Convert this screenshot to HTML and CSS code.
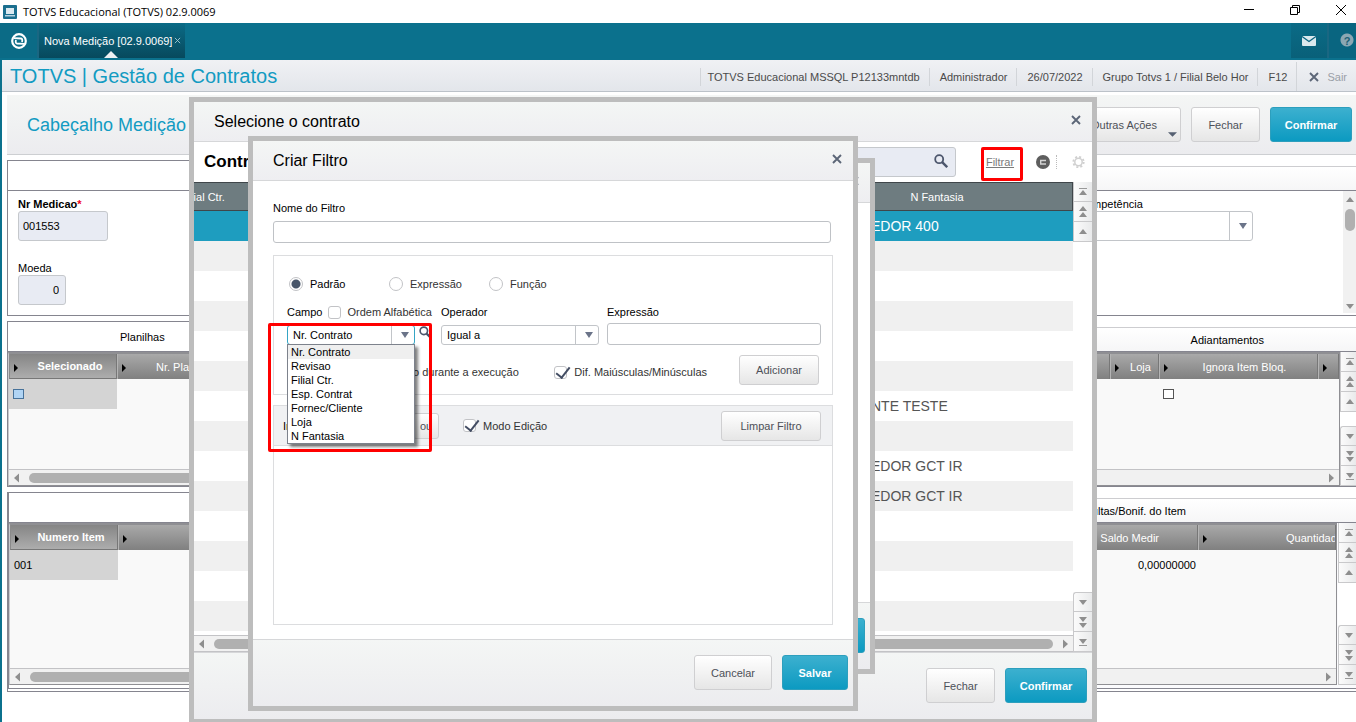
FILE: index.html
```html
<!DOCTYPE html>
<html lang="pt-BR">
<head>
<meta charset="utf-8">
<title>TOTVS Educacional (TOTVS) 02.9.0069</title>
<link rel="stylesheet" href="styles.css">
</head>
<body>
<svg class="defs" aria-hidden="true">
  <symbol id="i-top" viewBox="0 0 10 10"><path d="M1 1.5h8" stroke="#999" fill="none"/><path d="M5 3l4 5H1z" fill="#8e8e8e"/></symbol>
  <symbol id="i-pgup" viewBox="0 0 10 12"><path d="M5 0l4 5H1zM5 6l4 5H1z" fill="#8e8e8e"/></symbol>
  <symbol id="i-up" viewBox="0 0 10 10"><path d="M5 2l4 5H1z" fill="#8e8e8e"/></symbol>
  <symbol id="i-down" viewBox="0 0 10 10"><path d="M5 8l4-5H1z" fill="#8e8e8e"/></symbol>
  <symbol id="i-pgdn" viewBox="0 0 10 12"><path d="M5 12l4-5H1zM5 6l4-5H1z" fill="#8e8e8e"/></symbol>
  <symbol id="i-bottom" viewBox="0 0 10 10"><path d="M1 8.5h8" stroke="#999" fill="none"/><path d="M5 7l4-5H1z" fill="#8e8e8e"/></symbol>
  <symbol id="i-left" viewBox="0 0 10 10"><path d="M2 5l5-4.500v9z" fill="#8e8e8e"/></symbol>
  <symbol id="i-right" viewBox="0 0 10 10"><path d="M8 5L3 .5v9z" fill="#8e8e8e"/></symbol>
  <symbol id="i-caret" viewBox="0 0 8 6"><path d="M0 0h8L4 6z" fill="#6b7489"/></symbol>
  <symbol id="i-close" viewBox="0 0 10 10"><path d="M1 1l8 8M9 1L1 9" stroke="#5c6677" stroke-width="1.900" fill="none"/></symbol>
  <symbol id="i-search" viewBox="0 0 14 14"><circle cx="5.200" cy="5.200" r="4" fill="none" stroke="#4c566c" stroke-width="1.800"/><path d="M8.200 8.200l5 5" stroke="#4c566c" stroke-width="2.400"/></symbol>
</svg>

<div class="app">
  <header class="titlebar">
    <svg class="app-icon" viewBox="0 0 14 14"><rect width="14" height="14" rx="1" fill="#1b6f8f"/><rect x="3" y="3" width="8" height="6" fill="#dceaf1"/><path d="M2 10h10v1.500H2z" fill="#b7d2df"/></svg>
    <span class="win-title">TOTVS Educacional (TOTVS) 02.9.0069</span>
    <div class="win-controls">
      <button aria-label="Minimizar"><svg viewBox="0 0 10 10"><path d="M0 4.500h10"/></svg></button>
      <button aria-label="Restaurar"><svg viewBox="0 0 10 10"><path d="M.5 2.500h7v7h-7zM2.500 2.500v-2h7v7h-2"/></svg></button>
      <button aria-label="Fechar janela"><svg viewBox="0 0 10 10"><path d="M0 0l10 10M10 0L0 10"/></svg></button>
    </div>
  </header>

  <nav class="navbar">
    <button class="logo" aria-label="Início"><svg viewBox="0 0 16 16"><circle cx="8" cy="8" r="6.800" fill="none" stroke="#fff" stroke-width="2.200"/><path d="M3 5.200l7 .3c1.500.2 1.500 1.500 1 3.500M13 10.800l-7-.3c-1.500-.2-1.500-1.500-1-3.500" fill="none" stroke="#fff" stroke-width="1.800"/></svg></button>
    <button class="tab">Nova Medição [02.9.0069]<svg viewBox="0 0 8 8"><path d="M1 1l6 6M7 1L1 7"/></svg><i class="tab-mark"></i></button>
    <div class="nav-right">
      <button aria-label="Mensagens"><svg viewBox="0 0 14 10"><rect width="14" height="10" rx="1" fill="#dbe9ee"/><path d="M0 .5l7 5 7-5" fill="none" stroke="#0a6480" stroke-width="1.300"/></svg></button>
      <button class="help" aria-label="Ajuda">?</button>
    </div>
  </nav>

  <div class="shell">
    <div class="appbar">
      <h1>TOTVS | Gestão de Contratos</h1>
      <ul class="info">
        <li>TOTVS Educacional MSSQL P12133mntdb</li>
        <li>Administrador</li>
        <li>26/07/2022</li>
        <li>Grupo Totvs 1 / Filial Belo Hor</li>
        <li class="key">F12</li>
        <li class="exit"><svg viewBox="0 0 10 10"><use href="#i-close"/></svg><a href="#">Sair</a></li>
      </ul>
    </div>

    <div class="pagehead">
      <h2>Cabeçalho Medição</h2>
      <div class="actions">
        <button class="btn menu">Outras Ações<svg viewBox="0 0 10 5"><path d="M0 0h10L5 5z" fill="#566072"/></svg></button>
        <button class="btn">Fechar</button>
        <button class="btn primary">Confirmar</button>
      </div>
    </div>

    <main class="columns">
      <div class="col left">
        <section class="panel form-panel">
          <div class="panel-title"></div>
          <div class="fields">
            <label for="nr"><b>Nr Medicao<span class="req">*</span></b></label>
            <input id="nr" class="ro" value="001553" readonly>
            <label for="moeda">Moeda</label>
            <input id="moeda" class="ro short" value="0" readonly>
          </div>
        </section>
        <section class="panel grid-panel">
          <div class="panel-title">Planilhas</div>
          <div class="gridbox">
            <table class="grid">
              <tr><th class="c1 on">Selecionado</th><th class="next">Nr. Planilha</th></tr>
              <tr><td class="sel"><input type="checkbox" class="cell-check blue" aria-label="Selecionado"></td><td></td></tr>
            </table>
            <div class="hscroll"><svg><use href="#i-left"/></svg><i class="thumb"></i></div>
          </div>
        </section>
        <section class="panel last">
          <div class="inner">
            <div class="panel-title"></div>
            <div class="gridbox">
              <table class="grid">
                <tr><th class="c1 on">Numero Item</th><th class="next"></th></tr>
                <tr><td class="sel">001</td><td></td></tr>
              </table>
              <div class="hscroll"><svg><use href="#i-left"/></svg><i class="thumb"></i></div>
            </div>
          </div>
        </section>
      </div>

      <div class="col right">
        <section class="panel form-panel">
          <div class="panel-title"></div>
          <div class="scrollbody">
            <div class="comp">
              <label for="comp">Competência</label>
              <div class="combo tall"><select id="comp"><option></option></select><svg><use href="#i-caret"/></svg></div>
            </div>
            <div class="vscroll"><svg><use href="#i-up"/></svg><i></i><svg class="end"><use href="#i-down"/></svg></div>
          </div>
        </section>
        <section class="panel grid-panel">
          <div class="panel-title adi">Adiantamentos</div>
          <div class="gridrow">
            <div class="gridbox">
              <table class="grid">
                <tr><th></th><th class="w48">Loja</th><th class="w160">Ignora Item Bloq.</th><th class="w20"></th></tr>
                <tr><td></td><td></td><td><input type="checkbox" class="cell-check" aria-label="Ignora Item Bloq."></td><td></td></tr>
              </table>
              <div class="hscroll"><svg class="end"><use href="#i-right"/></svg></div>
            </div>
            <div class="vnav">
              <button aria-label="Topo"><svg><use href="#i-top"/></svg></button><button aria-label="Página acima"><svg><use href="#i-pgup"/></svg></button><button aria-label="Acima"><svg><use href="#i-up"/></svg></button>
              <button class="low" aria-label="Abaixo"><svg><use href="#i-down"/></svg></button><button aria-label="Página abaixo"><svg><use href="#i-pgdn"/></svg></button><button aria-label="Fim"><svg><use href="#i-bottom"/></svg></button>
            </div>
          </div>
        </section>
        <section class="panel last">
          <div class="inner">
            <div class="panel-title multas">Multas/Bonif. do Item</div>
            <div class="gridrow wide">
              <div class="gridbox">
                <table class="grid">
                  <tr><th class="saldo">Saldo Medir</th><th class="qtd">Quantidad</th></tr>
                  <tr><td class="num">0,00000000</td><td></td></tr>
                </table>
                <div class="hscroll"><svg class="end"><use href="#i-right"/></svg></div>
              </div>
              <div class="vnav">
                <button aria-label="Topo"><svg><use href="#i-top"/></svg></button><button aria-label="Página acima"><svg><use href="#i-pgup"/></svg></button><button aria-label="Acima"><svg><use href="#i-up"/></svg></button>
                <button class="low" aria-label="Abaixo"><svg><use href="#i-down"/></svg></button><button aria-label="Página abaixo"><svg><use href="#i-pgdn"/></svg></button><button aria-label="Fim"><svg><use href="#i-bottom"/></svg></button>
              </div>
            </div>
          </div>
        </section>
      </div>
    </main>
  </div>

  <div class="window w-contract" role="dialog" aria-label="Selecione o contrato">
    <div class="w-head"><h3>Selecione o contrato</h3><button class="x" aria-label="Fechar"><svg viewBox="0 0 10 10"><use href="#i-close"/></svg></button></div>
    <div class="tools">
      <strong>Contratos</strong>
      <div class="search"><input aria-label="Pesquisar"><svg><use href="#i-search"/></svg></div>
      <span class="mark"><a href="#">Filtrar</a></span>
      <svg class="round" viewBox="0 0 14 14"><circle cx="7" cy="7" r="7" fill="#5e5e5e"/><path d="M10 5.500H4.700v3.500H10" stroke="#d4d4d4" stroke-width="1.400" fill="none"/></svg>
      <svg class="gear" viewBox="0 0 14 14"><circle cx="7" cy="7" r="4" fill="none" stroke="#d0d0d0" stroke-width="1.600"/><circle cx="7" cy="7" r="5.600" fill="none" stroke="#d0d0d0" stroke-width="2" stroke-dasharray="2.200 2.200"/></svg>
    </div>
    <div class="list">
      <div class="listmain">
        <table>
          <tr><th class="filial">Filial Ctr.</th><th class="fant">N Fantasia</th></tr>
          <tr class="active"><td></td><td>EDOR 400</td></tr>
          <tr><td></td><td></td></tr>
          <tr><td></td><td></td></tr>
          <tr><td></td><td></td></tr>
          <tr><td></td><td></td></tr>
          <tr><td></td><td></td></tr>
          <tr><td></td><td>NTE TESTE</td></tr>
          <tr><td></td><td></td></tr>
          <tr><td></td><td>EDOR GCT IR</td></tr>
          <tr><td></td><td>EDOR GCT IR</td></tr>
          <tr><td></td><td></td></tr>
          <tr><td></td><td></td></tr>
          <tr><td></td><td></td></tr>
          <tr><td></td><td></td></tr>
        </table>
        <div class="hscroll"><svg><use href="#i-left"/></svg><i class="thumb"></i><svg><use href="#i-right"/></svg></div>
      </div>
      <div class="vnav">
        <button aria-label="Topo"><svg><use href="#i-top"/></svg></button><button aria-label="Página acima"><svg><use href="#i-pgup"/></svg></button><button aria-label="Acima"><svg><use href="#i-up"/></svg></button>
        <button class="low" aria-label="Abaixo"><svg><use href="#i-down"/></svg></button><button aria-label="Página abaixo"><svg><use href="#i-pgdn"/></svg></button><button aria-label="Fim"><svg><use href="#i-bottom"/></svg></button>
      </div>
    </div>
    <div class="w-foot"><button class="btn">Fechar</button><button class="btn primary">Confirmar</button></div>
  </div>

  <div class="window w-back">
    <div class="w-head"><h3></h3><button class="x" aria-label="Fechar"><svg viewBox="0 0 10 10"><use href="#i-close"/></svg></button></div>
    <div class="blank"></div>
    <div class="w-foot"><button class="btn primary" aria-label="Aplicar"></button></div>
  </div>

  <div class="window w-filter" role="dialog" aria-label="Criar Filtro">
    <div class="w-head"><h3>Criar Filtro</h3><button class="x" aria-label="Fechar"><svg viewBox="0 0 10 10"><use href="#i-close"/></svg></button></div>
    <form class="fbody">
      <label class="name" for="nome">Nome do Filtro</label>
      <input id="nome" class="text">
      <div class="group">
        <div class="radios">
          <label class="dark"><input type="radio" name="t" checked>Padrão</label>
          <label><input type="radio" name="t">Expressão</label>
          <label><input type="radio" name="t">Função</label>
        </div>
        <div class="cond">
          <div class="field">
            <div class="lab"><label for="campo">Campo</label><label class="soft"><input type="checkbox">Ordem Alfabética</label></div>
            <div class="campo-row">
              <div class="combo campo"><select id="campo"><option>Nr. Contrato</option></select><svg><use href="#i-caret"/></svg>
                <ul class="options">
                  <li class="hot">Nr. Contrato</li><li>Revisao</li><li>Filial Ctr.</li><li>Esp. Contrat</li><li>Fornec/Cliente</li><li>Loja</li><li>N Fantasia</li>
                </ul>
                <i class="highlight"></i>
              </div>
              <svg class="mag" viewBox="0 0 14 14"><use href="#i-search"/></svg>
            </div>
          </div>
          <div class="field">
            <div class="lab"><label for="op">Operador</label></div>
            <div class="combo op"><select id="op"><option>Igual a</option></select><svg><use href="#i-caret"/></svg></div>
          </div>
          <div class="field">
            <div class="lab"><label for="exp">Expressão</label></div>
            <input id="exp" class="text">
          </div>
        </div>
        <div class="flags">
          <label class="ask"><input type="checkbox">o durante a execução</label>
          <label class="dif"><input type="checkbox" checked>Dif. Maiúsculas/Minúsculas</label>
          <button type="button" class="btn small">Adicionar</button>
        </div>
      </div>
      <div class="editor">
        <div class="ebar">
          <span class="ins">In</span>
          <button type="button" class="btn ou">ou</button>
          <label><input type="checkbox" checked>Modo Edição</label>
          <button type="button" class="btn small clear">Limpar Filtro</button>
        </div>
      </div>
    </form>
    <div class="w-foot"><button class="btn cancel">Cancelar</button><button class="btn primary save">Salvar</button></div>
  </div>
</div>
</body>
</html>
```
FILE: styles.css
```css
* { box-sizing: border-box; }
html, body { height: 100%; }
body {
  margin: 0;
  font: 11px/14px "Liberation Sans", Arial, sans-serif;
  color: #000;
  background: #fff;
}
button, input, select { font: inherit; color: inherit; margin: 0; }
button { cursor: pointer; }
h1, h2, h3, ul { margin: 0; padding: 0; font-weight: normal; }
ul { list-style: none; }
.defs { position: absolute; width: 0; height: 0; }
.app { position: relative; height: 100vh; overflow: hidden; display: flex; flex-direction: column; }

.titlebar { display: flex; align-items: center; height: 23px; padding: 0 5px 0 3px; gap: 6px; }
.app-icon { width: 14px; height: 14px; }
.win-title { font: 11px/16px "Open Sans", "Noto Sans", sans-serif; flex: 1; }
.win-controls { display: flex; gap: 36px; padding: 0 5px 3px 0; }
.win-controls button { border: 0; padding: 0; background: none; width: 10px; height: 10px; display: flex; }
.win-controls svg { width: 10px; height: 10px; stroke: #000; fill: none; overflow: visible; }

.navbar { display: flex; height: 37px; padding-bottom: 2px; background: #0b718d; flex: none; }
.logo { width: 39px; border: 0; border-right: 2px solid #1a6782; background: #0b6b86; padding: 0; display: grid; place-items: center; }
.logo svg { width: 16px; height: 16px; }
.tab {
  position: relative; border: 0; padding: 0 4px 0 5px; color: #fff; display: flex; align-items: center; gap: 2px;
  background: linear-gradient(#0b6b86, #07495d);
}
.tab svg { width: 7px; height: 7px; stroke: #a9cbd5; fill: none; }
.tab-mark { position: absolute; left: 65px; bottom: 0; border: 7px solid transparent; border-top: 0; border-bottom-color: #eef0f3; }
.nav-right { margin-left: auto; display: flex; }
.nav-right button { border: 0; border-right: 2px solid #1a6782; background: linear-gradient(#0b6b86, #096079); width: 38px; padding: 0; display: grid; place-items: center; }
.nav-right svg { width: 14px; height: 10px; }
.nav-right .help { width: 27px; border: 0; color: #1b5f75; font-weight: bold; background: radial-gradient(circle at 18px 17px, #8ba7b3 0 6px, #096580 7px); padding-left: 9px; }

.shell { flex: 1; border-left: 2px solid #0b718d; display: flex; flex-direction: column; }
.appbar { display: flex; height: 32px; border-bottom: 1px solid #bcc2c9; background: linear-gradient(#f0f1f4, #e3e6eb); padding-left: 8px; justify-content: space-between; }
.appbar h1 { font-size: 20px; line-height: 33px; color: #129bc2; white-space: nowrap; }
.info { display: flex; align-items: center; color: #4a4a4a; white-space: nowrap; padding: 2px 9px 0 0; }
.info li { border-left: 1px solid #d2d5d9; padding: 2px 9px 2px 10px; line-height: 14px; }
.info li:first-child { padding-left: 6px; }
.info .exit { align-self: stretch; display: flex; align-items: center; gap: 8px; padding: 0 0 0 12px; }
.info .exit svg { width: 10px; height: 10px; }
.info a { color: #9a9fa7; text-decoration: none; }

.pagehead {
  margin: 3px 0 0 5px; height: 60px; padding: 0 4px 0 20px; display: flex; justify-content: space-between; align-items: center;
  background: linear-gradient(#f4f6f5, #ececef); border-bottom: 1px solid #cdcfd2;
}
.pagehead h2 { font-size: 18px; line-height: 24px; color: #129bc2; }
.actions { display: flex; gap: 10px; }
.btn {
  height: 35px; min-width: 69px; padding: 0 10px; border: 1px solid #cfcfd1; border-radius: 3px;
  background: linear-gradient(#fff, #e6e6e6); color: #4d5058; flex: none;
}
.btn.primary { min-width: 82px; border-color: #2d9fbd; background: linear-gradient(#3cb0cf, #0c9ac1); color: #fff; font-weight: bold; }
.btn.menu { width: 110px; position: relative; text-align: right; padding-right: 23px; }
.btn.menu svg { position: absolute; right: 3px; bottom: 4px; width: 9px; height: 5px; }

.columns { display: flex; padding: 5px 0 0 5px; }
.col { display: flex; flex-direction: column; flex: 1; min-width: 0; }
.left { gap: 5px; }
.right { gap: 11px; padding-top: 6px; }
.panel { border: 1px solid #85858f; border-right: 0; display: flex; flex-direction: column; }
.right .panel { border-top-color: #cdcdd0; }
.form-panel { height: 156px; }
.grid-panel { height: 166px; }
.last { height: 200px; padding-bottom: 2px; }
.right .form-panel { height: 150px; }
.right .grid-panel { height: 160px; }
.right .last { height: 194px; }
.inner { flex: 1; display: flex; flex-direction: column; border-bottom: 1px solid #85858f; border-left: 1px solid #85858f; }
.panel-title { height: 30px; line-height: 31px; padding-left: 112px; border-bottom: 1px solid #85858f; flex: none; }
.right .panel-title { height: 24px; line-height: 25px; padding-left: 0; text-align: right; background: linear-gradient(#fff, #f6f6f7); }
.right .adi { padding-right: 92px; }
.right .multas { padding-right: 170px; }
.fields { display: flex; flex-direction: column; align-items: flex-start; padding: 6px 10px; }
.req { color: #f00020; }
.ro { width: 90px; height: 30px; border: 1px solid #c5c8cc; border-radius: 3px; background: #e8ebf3; padding: 0 4px; margin-bottom: 20px; }
.short { width: 48px; text-align: right; padding-right: 6px; }

.gridrow { display: flex; flex: 1; background: #fbfbfd; }
.gridrow.wide { gap: 1px; }
.gridbox { flex: 1; min-width: 0; border: 1px solid #8f8f93; border-top-width: 2px; border-left-color: #c8c8cb; background: #f9f9f9; display: flex; flex-direction: column; }
.last .gridbox { margin-bottom: 3px; }
.last .vnav { margin-bottom: 3px; }
.grid { border-collapse: separate; border-spacing: 0; table-layout: fixed; width: 100%; }
.grid th {
  height: 25px; padding: 0 0 0 12px; color: #fff; font-weight: normal; overflow: hidden; white-space: nowrap;
  border-right: 1px solid #777; border-left: 1px solid #b4b4b4;
  background: linear-gradient(#a9a9a9, #808080);
  position: relative;
}
.grid th::before { content: ""; position: absolute; left: 4px; top: 10px; border: 4px solid transparent; border-left-color: #000; border-right: 0; }
.grid th.on { font-weight: bold; background: linear-gradient(#858585, #adadad); border-left-color: #8a8a8a; border-bottom: 1px solid #777; padding-left: 14px; }
.grid th.next { text-align: left; padding-left: 38px; }
.grid td { height: 30px; padding: 0 4px; }
.grid .sel { background: #d4d4d4; }
.c1 { width: 108px; }
.w48 { width: 49px; } .w160 { width: 159px; } .w20 { width: 21px; }
.grid th.qtd { width: 138px; text-align: left; padding-left: 87px; }
.grid th.saldo { text-align: right; padding-right: 38px; }
.grid td.num { text-align: right; padding-right: 2px; }
.cell-check { appearance: none; width: 11px; height: 10px; border: 1px solid #555; background: #fff; display: block; }
.cell-check.blue { background: #b0d4f4; border-color: #47729a; }
.hscroll { margin-top: auto; height: 16px; flex: none; border-top: 1px solid #c3c3c6; background: #f1f1f1; display: flex; align-items: center; gap: 7px; padding: 0 3px; }
.hscroll svg { width: 10px; height: 10px; flex: none; }
.hscroll .end { margin-left: auto; }
.thumb { flex: 1; height: 10px; border-radius: 5px; background: #b0b0b0; }
.vnav { width: 19px; flex: none; display: flex; flex-direction: column; background: #fff; }
.vnav button { width: 19px; height: 20px; border: 0; border-left: 1px solid #c9c9cb; border-bottom: 1px solid #c9c9cb; background: linear-gradient(90deg, #fbfbfb, #e9eaeb); padding: 0; display: grid; place-items: center; }
.vnav svg { width: 10px; height: 12px; }
.vnav .low { margin-top: auto; border-top: 1px solid #c9c9cb; border-top-left-radius: 3px; }
.right .vnav { width: 16px; }
.right .wide .vnav { width: 18px; }
.right .vnav button { width: 100%; padding-left: 3px; }
.scrollbody { display: flex; flex: 1; justify-content: flex-end; padding-bottom: 2px; }
.comp { width: 175px; margin-right: 90px; padding-top: 6px; }
.comp label { display: block; }
.vscroll { width: 13px; background: #f1f1f1; display: flex; flex-direction: column; align-items: center; padding: 4px 0 2px; gap: 4px; overflow: hidden; }
.vscroll svg { width: 10px; height: 10px; flex: none; }
.vscroll i { width: 10px; height: 22px; border-radius: 5px; background: #b0b0b0; }
.vscroll .end { margin-top: auto; }

.combo { position: relative; height: 20px; }
.combo select { appearance: none; width: 100%; height: 100%; border: 1px solid #c2c5c9; border-radius: 3px; padding: 0 24px 0 5px; color: #000;
  background: linear-gradient(#c2c5c9, #c2c5c9) no-repeat right 22px top 0 / 1px 100% #fff; }
.combo > svg { position: absolute; right: 6px; top: 7px; width: 8px; height: 6px; pointer-events: none; }
.combo.tall { height: 30px; }
.combo.tall > svg { top: 12px; }

.window { position: absolute; border: 5px solid #bdbdbd; background: #fff; display: flex; flex-direction: column; }
.w-contract { left: 189px; top: 97px; width: 908px; bottom: -2px; }
.w-back { left: 270px; top: 158px; width: 605px; bottom: 48px; }
.w-filter { left: 248px; top: 136px; width: 610px; bottom: 11px; }
.w-head { height: 40px; flex: none; display: flex; justify-content: space-between; align-items: center; padding: 0 11px 0 20px; background: linear-gradient(#f4f6f5, #eeeef1); border-bottom: 1px solid #d6d7d9; }
.w-head h3 { font-size: 16px; line-height: 20px; padding-top: 1px; }
.x { border: 0; background: none; padding: 0; width: 10px; height: 10px; margin-bottom: 4px; }
.x svg { width: 10px; height: 10px; display: block; }
.w-foot { height: 67px; flex: none; display: flex; justify-content: flex-end; align-items: flex-start; gap: 10px; padding: 15px 5px 0; background: linear-gradient(#f4f6f5, #ececef); border-top: 1px solid #d6d7d9; }

.tools { display: flex; align-items: center; height: 40px; flex: none; padding: 0 7px 0 10px; }
.tools strong { font-size: 17px; line-height: 20px; font-weight: bold; }
.search { position: relative; margin-left: auto; width: 200px; height: 30px; }
.search input { width: 100%; height: 30px; border: 1px solid #c5c8cc; border-radius: 3px; background: #e8ebf3; padding: 0 30px 0 6px; }
.search svg { position: absolute; right: 8px; top: 7px; width: 14px; height: 14px; }
.mark { margin: 3px 13px 0 25px; width: 42px; height: 34px; border: 3px solid #f00; border-radius: 2px; text-align: center; line-height: 25px; padding-right: 4px; }
.mark a { color: #7a7a7a; }
.round { width: 14px; height: 14px; }
.gear { width: 29px; height: 14px; border-left: 1px dotted #bbb; margin-left: 6px; padding-left: 15px; }
.list { flex: 1; display: flex; min-height: 0; }
.listmain { flex: 1; display: flex; flex-direction: column; }
.list table { width: 100%; border-collapse: separate; border-spacing: 0; table-layout: fixed; }
.list th { height: 29px; padding: 0; background: #6e7c80; color: #fff; font-weight: normal; border: 1px solid #3f464a; border-width: 1px 1px 1px 0; white-space: nowrap; overflow: hidden; }
.list th.filial { width: 60px; text-align: left; text-indent: -12px; }
.list th.fant { padding: 0 0 0 548px; }
.list td { height: 30px; padding: 0; font-size: 14px; color: #555; }
.list td + td { padding-left: 617px; white-space: nowrap; }
.list tr:nth-child(odd) { background: #f0f0f0; }
.list tr.active { background: #1e9dbf; }
.list .active td { color: #fff; }
.listmain .hscroll { height: 17px; border-bottom: 1px solid #c3c3c6; }

.blank { flex: 1; }

.fbody { flex: 1; display: flex; flex-direction: column; padding: 20px 20px 14px; }
.name { margin-bottom: 6px; }
.text { width: 100%; height: 22px; border: 1px solid #bfc2c6; border-radius: 3px; background: #fff; padding: 0 5px; }
#nome { width: calc(100% - 2px); flex: none; }
.group { margin: 12px 0 10px; border: 1px solid #dcdddf; padding: 20px 11px 9px 13px; }
.group label, .ebar label { display: flex; align-items: center; color: #333; white-space: nowrap; }
.radios { display: flex; height: 16px; }
.radios label { width: 100px; gap: 7px; }
.group .dark, .lab > label:first-child { color: #000; }
input[type=radio], .group input[type=checkbox], .ebar input[type=checkbox] {
  appearance: none; width: 14px; height: 14px; border: 1px solid #c2c3c6; background: #fff; flex: none;
}
input[type=radio] { border-radius: 50%; margin-left: 2px; }
input[type=radio]:checked { background: radial-gradient(circle, #475569 0 4px, #fff 5px); }
.group input[type=checkbox], .ebar input[type=checkbox] { border-radius: 3px; width: 13px; height: 13px; position: relative; }
.group input:checked[type=checkbox]::after, .ebar input:checked[type=checkbox]::after {
  content: ""; position: absolute; left: 4px; top: -3px; width: 6px; height: 12px;
  border: solid #434d63; border-width: 0 2px 2px 0; transform: rotate(38deg);
}
.cond { display: grid; grid-template-columns: 154px 166px 1fr; margin-top: 13px; }
.field { display: flex; flex-direction: column; height: 40px; justify-content: space-between; }
.lab { display: flex; gap: 6px; height: 14px; }
.lab .soft { gap: 6px; }
.campo-row { display: flex; gap: 4px; }
.campo { width: 128px; }
.campo select { border-color: #35a5c5; }
.op { width: 158px; }
.mag { width: 13px; height: 13px; margin-top: 1px; }
.options { position: absolute; z-index: 2; left: 0; top: 19px; width: 128px; border: 1px solid #7d828c; background: #fff; box-shadow: 3px 3px 3px rgba(0, 0, 0, .5); }
.options li { height: 14px; line-height: 14px; padding-left: 3px; }
.options .hot { background: #efefef; }
.highlight { position: absolute; z-index: 3; left: -19px; top: -2px; width: 164px; height: 129px; border: 3px solid #f00; border-radius: 2px; pointer-events: none; }
.flags { display: flex; align-items: center; margin-top: 10px; padding-right: 2px; }
.flags label { gap: 7px; padding-top: 4px; }
.flags .dif { margin-left: auto; margin-right: 32px; }
.flags .ask { gap: 113px; }
.small { height: 30px; min-width: 80px; }
.editor { flex: 1; border: 1px solid #dcdddf; }
.ebar { display: flex; align-items: center; height: 40px; padding: 0 11px 0 9px; background: #f0f1f3; border-bottom: 1px solid #dcdddf; }
.ins { width: 130px; }
.ou { height: 26px; min-width: 26px; width: 26px; padding: 0; margin-top: 1px; text-align: center; }
.ebar label { margin-left: 24px; gap: 7px; }
.clear { min-width: 100px; margin-left: auto; margin-top: 1px; }
.cancel { min-width: 78px; }
.btn.save { min-width: 66px; }
```
